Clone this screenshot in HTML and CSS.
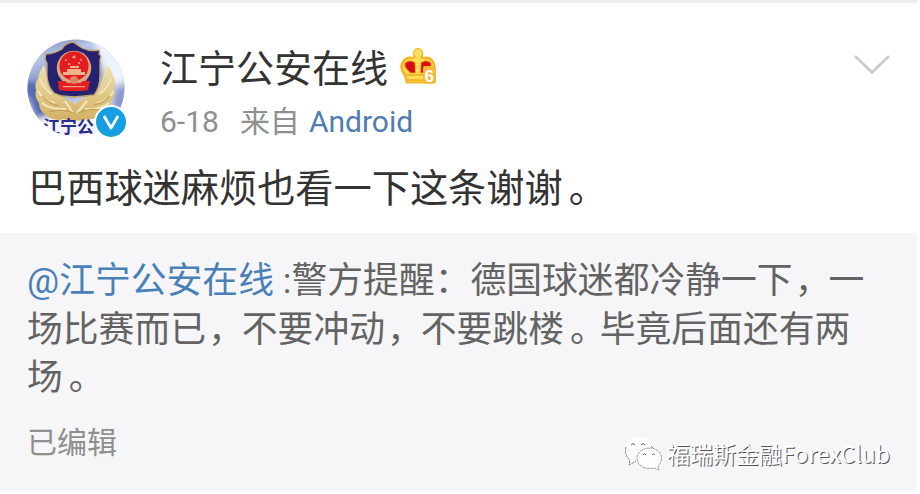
FILE: index.html
```html
<!DOCTYPE html>
<html lang="zh-CN">
<head>
<meta charset="utf-8">
<title>江宁公安在线</title>
<link rel="stylesheet" href="styles.css">
</head>
<body>
<article class="post">
  <header class="head">
    <div class="avatar">
      <svg class="photo" viewBox="0 0 98 98" width="98" height="98">
        <defs>
          <clipPath id="round"><circle cx="49" cy="49" r="48.5"/></clipPath>
          <linearGradient id="sky" x1="0" y1="0" x2="0.3" y2="1">
            <stop offset="0" stop-color="#6673b4"/><stop offset=".22" stop-color="#b9c6e6"/>
            <stop offset=".5" stop-color="#8291c4"/><stop offset=".75" stop-color="#c7d0ea"/><stop offset="1" stop-color="#f4f4fb"/>
          </linearGradient>
          <linearGradient id="gold" x1="0" y1="0" x2="0" y2="1">
            <stop offset="0" stop-color="#eee1b4"/><stop offset=".6" stop-color="#dfc581"/><stop offset="1" stop-color="#d2b064"/>
          </linearGradient>
          <filter id="soft"><feGaussianBlur stdDeviation="3"/></filter>
          <filter id="grain"><feGaussianBlur stdDeviation=".6"/></filter>
        </defs>
        <g clip-path="url(#round)">
          <rect width="98" height="98" fill="url(#sky)"/>
          <g filter="url(#soft)">
            <path d="M66 0h40v46H80z" fill="#edf3fb"/>
            <path d="M0 52l22 24 70 0 10 25H0z" fill="#f4f4fa"/>
            <path d="M-4 43l15 0 12 34-16 3z" fill="#5968b2"/>
            <path d="M88 53l12-12v42H84z" fill="#8794cc"/>
            <path d="M0 83q10 4 14 16H0z" fill="#2a3691"/>
          </g>
          <g filter="url(#grain)">
            <path d="M17 26q-5 7-6 14-4 5-2 11-2 7 3 13 0 8 7 12 8 7 18 4 5 3 11 1 6 2 12-1 10 1 16-6 8-5 8-12 5-6 3-13 3-6-1-12-1-6-6-11L72 50 48 65 25 52z" fill="url(#gold)"/>
            <path d="M13 40q4 10 12 15M11 52q6 10 17 12M15 64q9 7 24 6M84 40q-4 10-12 15M87 52q-6 10-17 12M82 64q-9 7-24 6M38 62l8 12M60 62l-10 12" fill="none" stroke="#f3e7bd" stroke-width="2"/>
            <path d="M15 57q7 8 17 10M83 57q-6 7-16 9M22 73q12-4 25 1M76 72q-12-4-25 2" fill="none" stroke="#c49f56" stroke-width="1.2"/>
            <path d="M46 3l9 6q8 4 17 2 1 2 0 4 3 2 1 5v16q0 13-6 20l-9 1-11 1-12-1-8-3q-6-6-7-17V24q-3-4-1-9 8 0 16-5 3-6 11-7z" fill="#28236f" stroke="#c3a26e" stroke-width="1.3"/>
          </g>
          <circle cx="47" cy="29" r="17.2" fill="#dda983"/>
          <circle cx="47" cy="27" r="14.6" fill="#e21c20"/>
          <path d="M31 42h7l3 2h12l3-2h7l-2 9-7 1H40l-8-1z" fill="#e52022"/>
          <path d="M36 33h22v3H36zM40 30h14v3H40zM43 27h9v2h-9z" fill="#efb389"/>
          <circle cx="47" cy="41" r="4" fill="#e18460"/>
          <g fill="#f0a080"><circle cx="47" cy="18" r="1.6"/><circle cx="39" cy="21" r="1"/><circle cx="54" cy="21" r="1"/><circle cx="42" cy="25" r="1"/><circle cx="52" cy="24" r="1"/><path d="M36 47h22v1.200H36z"/></g>
          <text class="photo-text" x="16" y="93.5" textLength="68">江宁公安</text>
        </g>
      </svg>
      <svg class="verified" viewBox="0 0 34 34" width="34" height="34">
        <circle cx="17" cy="17" r="17" fill="#fff"/><circle cx="17" cy="17" r="15" fill="#169fe0"/>
        <path d="M10 11l7 12 7-12" fill="none" stroke="#fff" stroke-width="2.8" stroke-linejoin="round"/>
      </svg>
    </div>
    <div class="who">
      <div class="name-row">
        <span class="name">江宁公安在线</span>
        <svg class="crown" viewBox="0 0 38 38" width="38" height="38">
          <path d="M7 36.5q-1-6-3-9Q-1 20 3 14q4-6 11-4 0-2 0-4a5 5 0 0 1 10 0q0 2 0 4 7-2 11 4 3 6-1 13v9.500z" fill="#f6b526"/>
          <path d="M9 34.500l-1.500-7Q2 21 5 15.500q4-5 10-3.500l2-2.500q-2-1-2-3.500a4 4 0 0 1 8 0q0 2.500-2 3.500l2 2.500q6-1.500 10 3.500 3 6-2 12l-1 7z" fill="#ffdd55"/>
          <path d="M16 15.500l.5 10.500H11.500Q2 18 8 14.500q4-2 8 1zM22 15.500l-.5 10.500h5Q36 18 30 14.500q-4-2-8 1z" fill="#d90b17" stroke="#f0a726" stroke-width="1"/>
          <circle cx="19" cy="6" r="2.800" fill="#ffdf68"/>
          <path d="M8 28h17M8 33h17" stroke="#efa920" stroke-width="1.500"/>
          <rect x="24" y="19" width="13" height="17.500" rx="2" fill="#f2b838"/>
          <text class="level" x="25.500" y="34.500">6</text>
        </svg>
      </div>
      <div class="meta"><span>6-18</span><span class="from">来自</span><a class="source">Android</a></div>
    </div>
    <svg class="chevron" viewBox="0 0 38 22" width="38" height="22"><path d="M2 2l17 16.500L36 2" fill="none" stroke="#c9c9c9" stroke-width="2.500"/></svg>
  </header>
  <p class="body">巴西球迷麻烦也看一下这条谢谢<span class="stop">。</span></p>
  <section class="quote">
    <p class="quote-text"><a class="mention">@江宁公安在线</a> :警方提醒：德国球迷都冷静一下<span class="comma">，</span>一<br>场比赛而已<span class="comma">，</span>不要冲动<span class="comma">，</span>不要跳楼<span class="stop">。</span>毕竟后面还有两<br>场<span class="stop">。</span></p>
    <footer class="foot">
      <span class="edited">已编辑</span>
      <div class="watermark">
        <svg class="wechat" viewBox="0 0 40 36" width="40" height="36">
          <g fill="#fdfdfd">
            <path d="M6 25C-2 19 1 8 7 4 16-2 29 3 30 13L28 22 20 27 13 26 6 30z"/>
            <path d="M3 12Q1 20 7 25L6 30 13 26M28 11L30 13" fill="none" stroke="#777" stroke-width=".9" stroke-dasharray="3 .7"/>
            <path d="M27 13c-8 0-13 5-13 10 0 8 8 12 17 10l5 2-1-4c8-8 1-18-8-18z" stroke="#888" stroke-width=".8" stroke-dasharray="3 .7"/>
          </g>
          <path d="M8 10q2-3 4 0M18 10q2-3 4 0M20 20q1.500-2.500 3 0M29 20q1.500-2.500 3 0" fill="none" stroke="#666"/>
        </svg>
        <span class="club">福瑞斯金融ForexClub</span>
      </div>
    </footer>
  </section>
</article>
</body>
</html>
```
FILE: styles.css
```css
* { box-sizing: border-box; }
body {
  margin: 0;
  background: #fff;
  font-family: Roboto, "Noto Sans CJK SC", sans-serif;
  font-weight: 400;
}
p { margin: 0; }
.post {
  width: 917px;
  border-top: 3px solid #eee;
  white-space: nowrap;
}
.head {
  display: flex;
  align-items: flex-start;
  height: 157px;
  padding: 36px 26px 0 27px;
}
.avatar { position: relative; width: 98px; height: 98px; }
.photo { display: block; }
.photo-text {
  font: 700 17px "Noto Sans CJK SC", sans-serif;
  fill: #292c8a;
}
.verified { position: absolute; left: 67px; top: 66px; }
.who { flex: 1; padding-left: 35px; }
.name-row { display: flex; align-items: center; height: 58px; margin-top: 1px; }
.name { font-size: 38px; line-height: 58px; color: #333; }
.crown { margin: -6px 0 0 11px; }
.level { font: 700 17px "Liberation Sans", sans-serif; fill: #fff; }
.meta {
  display: flex;
  height: 46px;
  padding-top: 1px;
  font-size: 30px;
  line-height: 46px;
  color: #8f8f8f;
}
.from { margin-left: 21px; }
.source { margin-left: 9px; color: #507daf; }
.chevron { margin-top: 15px; }
.body {
  height: 73px;
  padding-left: 28px;
  font-size: 38.2px;
  line-height: 58px;
  color: #333;
}
/* half-width punctuation set inside a full-width cell */
.stop, .comma {
  display: inline-block;
  width: 1em;
  font-feature-settings: "halt";
}
.stop { padding-left: 6px; }
.comma { padding-left: 2px; }
.quote {
  height: 258px;
  padding: 24px 26px 0 27px;
  background: #f6f6f8;
}
.quote-text { font-size: 35.8px; line-height: 48.5px; color: #636363; }
.mention { color: #4a80b8; }
.foot {
  display: flex;
  justify-content: space-between;
  align-items: flex-start;
  padding-top: 18px;
}
.edited { font-size: 30px; line-height: 44px; color: #8f8f8f; }
.watermark { display: flex; padding-top: 15px; }
.wechat { margin-top: -1px; }
.club {
  margin: 0 1px 0 4px;
  font-family: "Noto Sans CJK SC", sans-serif;
  font-size: 23px;
  line-height: 34px;
  color: #fff;
  text-shadow: 1px 1px 0 #555;
}
```
